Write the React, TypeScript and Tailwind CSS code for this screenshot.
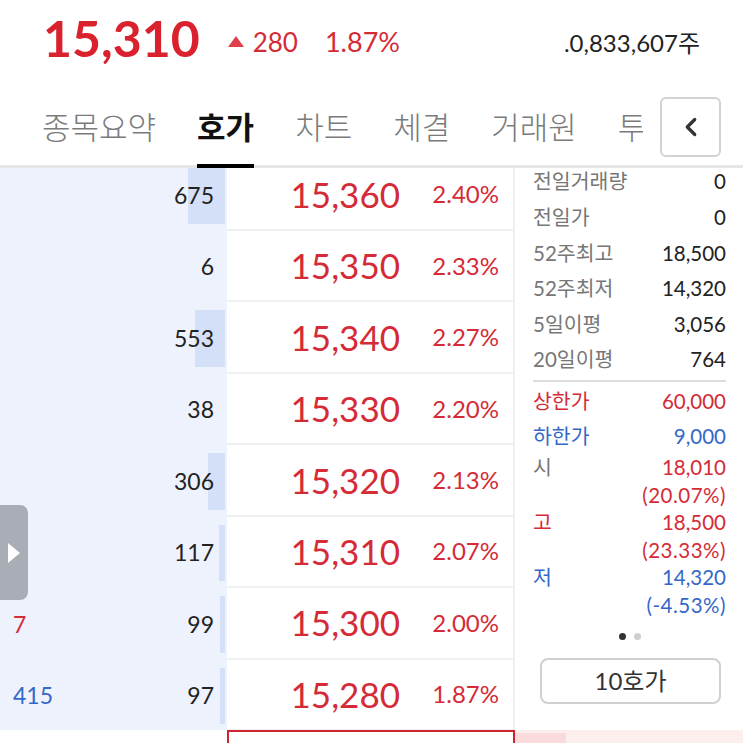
import { ChevronLeft } from "lucide-react";

const asks = [
  { qty: 675, price: "15,360", pct: "2.40%" },
  { qty: 6, price: "15,350", pct: "2.33%" },
  { qty: 553, price: "15,340", pct: "2.27%" },
  { qty: 38, price: "15,330", pct: "2.20%" },
  { qty: 306, price: "15,320", pct: "2.13%" },
  { qty: 117, price: "15,310", pct: "2.07%" },
  { qty: 99, price: "15,300", pct: "2.00%", side: "7", sideColor: "text-[#d42b37]" },
  { qty: 97, price: "15,280", pct: "1.87%", side: "415", sideColor: "text-[#3468c8]" },
];

const tabs = ["종목요약", "호가", "차트", "체결", "거래원", "투자자"];

const stats = [
  { label: "전일거래량", value: "0" },
  { label: "전일가", value: "0" },
  { label: "52주최고", value: "18,500" },
  { label: "52주최저", value: "14,320" },
  { label: "5일이평", value: "3,056" },
  { label: "20일이평", value: "764" },
];

const maxQty = 675;

function AskRow({ row }: { row: (typeof asks)[number] }) {
  const barW = (row.qty / maxQty) * 37;
  return (
    <div className="flex h-[71.43px] shrink-0">
      <div className="relative flex w-[227px] items-center bg-[#edf2fd] pl-[13px] pr-[13px] text-[23px] text-[#222]">
        {barW > 2.5 && (
          <div
            className="absolute right-[2px] top-[8px] bottom-[7px] bg-[#d4e0f8]"
            style={{ width: `${barW}px` }}
          />
        )}
        {row.side && <span className={`relative ${row.sideColor}`}>{row.side}</span>}
        <span className="relative ml-auto">{row.qty}</span>
      </div>
      <div className="flex w-[288px] items-center justify-end border-b-2 border-r-2 border-[#f0f0f0] bg-white pr-[14px] text-[#d42b37]">
        <span className="text-[35px] leading-none">{row.price}</span>
        <span className="w-[99px] text-right text-[24px] leading-none">{row.pct}</span>
      </div>
    </div>
  );
}

function StatRow({ label, value, labelColor, valueColor, h }: { label: string; value: string; labelColor?: string; valueColor?: string; h: string }) {
  return (
    <div className={`flex items-center justify-between ${h}`}>
      <span className={labelColor ?? "text-[#777]"}>{label}</span>
      <span className={valueColor ?? "text-[#222]"}>{value}</span>
    </div>
  );
}

export default function App() {
  return (
    <div className="h-[743px] w-[743px] overflow-hidden bg-white font-['Lato','Noto_Sans_CJK_KR',sans-serif]">
      {/* header */}
      <div className="flex h-[88px] items-end pb-[25px] pl-[43px] pr-[43px]">
        <span className="text-[50px] font-bold leading-none text-[#d9222d]">15,310</span>
        <span className="mb-[8px] ml-[28px] flex items-end text-[26px] leading-none text-[#d42b37]">
          <svg width="16" height="11" viewBox="0 0 16 11" className="mb-[8px] mr-[9px]">
            <path d="M8 0L16 11H0z" fill="#e0404a" />
          </svg>
          280
        </span>
        <span className="mb-[8px] ml-[27px] text-[27px] leading-none text-[#d42b37]">1.87%</span>
        <span className="mb-[8px] ml-auto text-[24px] leading-none text-[#222]">.0,833,607주</span>
      </div>

      {/* tabs */}
      <div className="relative flex h-[80px] gap-[41px] border-b-[3px] border-[#e6e6e6] pl-[42px]">
        {tabs.map((t) => (
          <div
            key={t}
            className={`-mb-[3px] flex shrink-0 items-center border-b-[4px] pt-[3px] text-[31px] ${
              t === "호가" ? "border-black font-bold text-[#111]" : "border-transparent font-light text-[#7b7b7b]"
            }`}
          >
            {t}
          </div>
        ))}
        <div className="absolute right-0 top-0 flex h-[77px] w-[100px] items-center bg-white pl-[17px]">
          <div className="flex h-[60px] w-[61px] items-center justify-center rounded-md border-2 border-[#d2d2d2] text-[#333]">
            <ChevronLeft size={30} strokeWidth={2.6} />
          </div>
        </div>
      </div>

      {/* ask book */}
      <div className="relative flex h-[562px] overflow-hidden">
        <div className="-mt-[8.4px] flex w-[515px] flex-col">
          {asks.map((r) => (
            <AskRow key={r.price} row={r} />
          ))}
        </div>

        <div className="-mt-[4px] flex w-[228px] flex-col pl-[18px] pr-[17px] text-[20.5px]">
          {stats.map((s) => (
            <StatRow key={s.label} label={s.label} value={s.value} h="h-[35.6px]" />
          ))}
          <div className="mt-[2px] h-[2px] bg-[#dcdcdc]" />
          <div className="mt-[2.4px]">
            <StatRow label="상한가" value="60,000" labelColor="text-[#d42b37]" valueColor="text-[#d42b37]" h="h-[35px]" />
            <StatRow label="하한가" value="9,000" labelColor="text-[#3468c8]" valueColor="text-[#3468c8]" h="h-[35px]" />
          </div>
          {[
            { l: "시", v: "18,010", p: "(20.07%)", lc: "text-[#777]", vc: "text-[#d42b37]" },
            { l: "고", v: "18,500", p: "(23.33%)", lc: "text-[#d42b37]", vc: "text-[#d42b37]" },
            { l: "저", v: "14,320", p: "(-4.53%)", lc: "text-[#3468c8]", vc: "text-[#3468c8]" },
          ].map((g) => (
            <div key={g.l} className="flex justify-between">
              <span className={`flex h-[27.5px] items-center ${g.lc}`}>{g.l}</span>
              <div className={`flex flex-col items-end ${g.vc}`}>
                <span className="flex h-[27.5px] items-center">{g.v}</span>
                <span className="flex h-[27.5px] items-center tracking-[0.5px]">{g.p}</span>
              </div>
            </div>
          ))}
          <div className="mt-[14px] flex justify-center gap-[8px]">
            <span className="h-[7px] w-[7px] rounded-full bg-[#333]" />
            <span className="h-[7px] w-[7px] rounded-full bg-[#cfcfcf]" />
          </div>
          <div className="ml-[7px] mt-[18px] flex h-[46px] w-[181px] items-center justify-center rounded-lg border-2 border-[#d0d0d0] text-[24px] text-[#333]">
            10호가
          </div>
        </div>

        <div className="absolute left-0 top-[337px] flex h-[95px] w-[28px] items-center justify-center rounded-r-lg bg-[#a9adb6]">
          <svg width="12" height="20" viewBox="0 0 12 20">
            <path d="M0 0L12 10L0 20z" fill="#fff" />
          </svg>
        </div>
      </div>

      {/* bid side start */}
      <div className="flex h-[13px]">
        <div className="w-[227px] bg-white" />
        <div className="w-[288px] border-x-2 border-t-2 border-[#cf2330]" />
        <div className="flex flex-1 bg-[#fdeeee]">
          <div className="mt-[3px] w-[51px] bg-[#f9dadd]" />
        </div>
      </div>
    </div>
  );
}
